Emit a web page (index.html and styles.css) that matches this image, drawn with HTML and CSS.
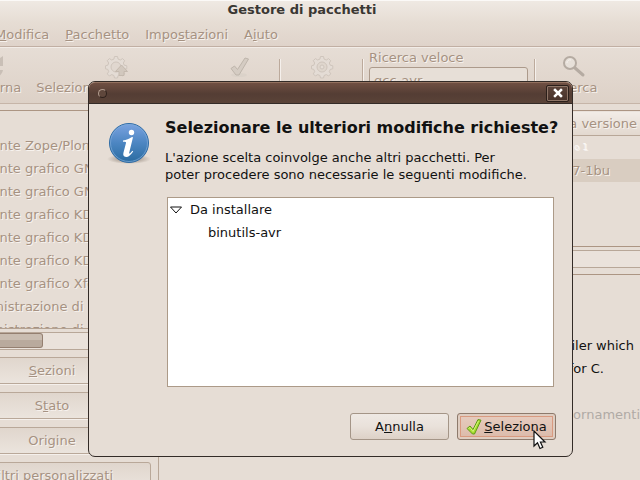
FILE: index.html
```html
<!DOCTYPE html>
<html lang="it">

<head>
    <meta charset="UTF-8">
    <meta name="viewport" content="width=device-width, initial-scale=1.0">
    <title>Gestore di pacchetti</title>
    <link rel="stylesheet" href="styles.css">
</head>

<body>
    <!-- Main window -->
    <div class="window">
        <header class="titlebar">
            <h1>Gestore di pacchetti</h1>
        </header>

        <nav class="menubar">
            <a href="#"><u>M</u>odifica</a>
            <a href="#"><u>P</u>acchetto</a>
            <a href="#">Impo<u>s</u>tazioni</a>
            <a href="#">A<u>i</u>uto</a>
        </nav>

        <div class="toolbar">
            <button class="tool tool-refresh" disabled>
                <svg width="24" height="24" viewBox="0 0 24 24">
                    <path d="M3 11a9 9 0 0 1 14-6l6-4v10h-9l3-3a6 6 0 0 0-9 3zM23 15a9 9 0 0 1-14 6l-4 3v-9h9l-3 3a6 6 0 0 0 9-3z" fill="#c9bfb6" />
                </svg>
                <span>Aggiorna</span>
            </button>
            <button class="tool tool-upgrade" disabled>
                <svg width="24" height="24" viewBox="0 0 24 24">
                    <path d="M9.500 1.500h3l.6 2.600 2.200.9 2.300-1.400 2.100 2.100-1.400 2.300.9 2.200 2.600.6v3l-2.600.6-.9 2.200 1.400 2.300-2.100 2.100-2.300-1.400-2.200.9-.6 2.500h-3l-.6-2.500-2.200-.9-2.300 1.400-2.100-2.100 1.400-2.300-.9-2.200L.500 13.800v-3l2.300-.6.9-2.200-1.400-2.300 2.100-2.100 2.300 1.400 2.200-.9z" fill="#e4dcd5" stroke="#cfc5bc" />
                    <circle cx="11" cy="12" r="5" fill="#e0d7cf" stroke="#cfc5bc" />
                    <path d="M16.500 10l6 6.500h-3.500v4h-5v-4h-3.500z" fill="#d2c8be" stroke="#c4b9ae" />
                </svg>
                <span>Seleziona aggiornamenti</span>
            </button>
            <button class="tool tool-apply" disabled>
                <svg width="24" height="24" viewBox="0 0 24 24">
                    <ellipse cx="11" cy="20" rx="8" ry="2" fill="#dbd2c9" />
                    <path d="M3 13.500l3.500-2.500 3 3.500L17 3l3.500 1L11 20H8z" fill="#d5ccc3" stroke="#beb5ab" stroke-linejoin="round" />
                </svg>
                <span>Applica</span>
            </button>
            <span class="separator"></span>
            <button class="tool tool-properties" disabled>
                <svg width="24" height="24" viewBox="0 0 24 24">
                    <path d="M10.500 1.500h3l.6 2.600 2.200.9 2.300-1.400 2.100 2.100-1.400 2.300.9 2.200 2.600.6v3l-2.600.6-.9 2.200 1.400 2.300-2.100 2.100-2.300-1.400-2.200.9-.6 2.500h-3l-.6-2.500-2.200-.9-2.300 1.400-2.100-2.100 1.400-2.300-.9-2.200-2.300-.6v-3l2.300-.6.9-2.200-1.400-2.300 2.100-2.100 2.300 1.400 2.200-.9z" fill="#e4dcd5" stroke="#cfc5bc" />
                    <circle cx="12" cy="12" r="5" fill="#dfd6cd" stroke="#cfc5bc" />
                    <circle cx="12" cy="12" r="2" fill="#e6ded6" stroke="#cfc5bc" />
                </svg>
                <span>Proprietà</span>
            </button>
            <span class="separator"></span>
            <div class="quick-search">
                <label for="quickSearch">Ricerca veloce</label>
                <input type="text" id="quickSearch" value="gcc-avr" disabled>
            </div>
            <span class="separator"></span>
            <button class="tool tool-search" disabled>
                <svg width="24" height="24" viewBox="0 0 24 24">
                    <path d="M13 13l8 7" stroke="#b5aba2" stroke-width="3" stroke-linecap="round" />
                    <circle cx="8" cy="8" r="6" fill="#e7e0d9" stroke="#b5aba2" stroke-width="2" />
                    <path d="M5 8a3 3 0 0 1 4-3" fill="none" stroke="#f6f2ee" />
                </svg>
                <span>Ricerca</span>
            </button>
        </div>

        <main class="panes">
            <!-- Section list and filter buttons -->
            <aside class="sidebar">
                <ul class="sections">
                    <li>Ambiente Zope/Plon</li>
                    <li>Ambiente grafico GN</li>
                    <li>Ambiente grafico GN</li>
                    <li>Ambiente grafico KD</li>
                    <li>Ambiente grafico KD</li>
                    <li>Ambiente grafico KD</li>
                    <li>Ambiente grafico Xfc</li>
                    <li>Amministrazione di</li>
                    <li>Amministrazione di</li>
                </ul>
                <div class="scrollbar"><div class="thumb"></div></div>
                <div class="filters">
                    <button disabled><u>S</u>ezioni</button>
                    <button disabled>S<u>t</u>ato</button>
                    <button disabled>Origine</button>
                    <button disabled>Filtri personalizzati</button>
                </div>
            </aside>

            <!-- Package list and description -->
            <section class="content">
                <table class="packages">
                    <thead>
                        <tr><th>a versione</th></tr>
                    </thead>
                    <tbody>
                        <tr><td class="faded">o 1</td></tr>
                        <tr class="selected"><td>7-1bu</td></tr>
                        <tr><td></td></tr>
                    </tbody>
                </table>
                <div class="scrollbar"></div>
                <div class="description">
                    <p>iler which</p>
                    <p>for C.</p>
                    <p class="muted">ornamenti</p>
                </div>
            </section>
        </main>
    </div>

    <!-- Confirmation dialog -->
    <div class="dialog" role="dialog" aria-labelledby="dialogTitle">
        <div class="dialog-bar">
            <span class="dialog-dot"></span>
            <button class="close" aria-label="Chiudi">
                <svg width="10" height="10" viewBox="0 0 10 10">
                    <path d="M2 2l6 6M8 2L2 8" stroke="#fff" stroke-width="2.500" stroke-linecap="square" />
                </svg>
            </button>
        </div>
        <div class="dialog-body">
            <svg class="info" width="48" height="48" viewBox="0 0 48 48">
                <defs>
                    <linearGradient id="blue" x1="0" y1="0" x2="0" y2="1">
                        <stop offset="0" stop-color="#7ba3e0" />
                        <stop offset="0.500" stop-color="#4c86c2" />
                        <stop offset="1" stop-color="#2a6ba0" />
                    </linearGradient>
                    <radialGradient id="shade">
                        <stop offset="0.500" stop-color="#b5aaa0" />
                        <stop offset="1" stop-color="#b5aaa0" stop-opacity="0" />
                    </radialGradient>
                </defs>
                <ellipse cx="24" cy="41" rx="22" ry="5" fill="url(#shade)" />
                <circle cx="24" cy="25" r="19.500" fill="url(#blue)" stroke="#2f6ca6" />
                <circle cx="24" cy="25" r="18.500" fill="none" stroke="#7fabd8" stroke-opacity="0.700" />
                <circle cx="26.500" cy="14.500" r="2.700" fill="#fff" />
                <path d="M18 22.500c3.500-.5 6-1.500 9-3.500l1 .2-3.800 15.500c-.2 1 .5 1 1.200.2l2-2.200.8.7c-2.500 3.500-4.500 5.500-7 5.500-2.800 0-3.300-1.800-2.700-4.300l2.500-9.500c.3-1.100-.2-1.400-3-1.400z" fill="#fff" />
            </svg>
            <div class="message">
                <h2 id="dialogTitle">Selezionare le ulteriori modifiche richieste?</h2>
                <p>L'azione scelta coinvolge anche altri pacchetti. Per<br>poter procedere sono necessarie le seguenti modifiche.</p>
                <div class="changes">
                    <div class="group">
                        <svg width="12" height="10" viewBox="0 0 12 10">
                            <path d="M.5 2h11L6 8z" fill="#fff" stroke="#111" />
                        </svg>
                        <span>Da installare</span>
                    </div>
                    <div class="package">binutils-avr</div>
                </div>
            </div>
        </div>
        <div class="actions">
            <button class="btn"><span>A<u>n</u>nulla</span></button>
            <button class="btn btn-hover">
                <svg width="16" height="18" viewBox="0 0 16 18">
                    <path d="M1 10.500l3-2.500 3 3.500L12 1.500l3 .7L8.500 16H6.500z" fill="#a5dc2f" stroke="#5f9a17" stroke-linejoin="round" />
                    <path d="M2.500 10.500l1.500-1 3 4L12.500 3" fill="none" stroke="#d5f57c" />
                </svg>
                <span><u>S</u>eleziona</span>
            </button>
        </div>
        <svg class="cursor" width="14" height="20" viewBox="0 0 14 20">
            <path d="M1 1v15l3.500-3.300L7 18.500l2.800-1.200L7.400 12H12z" fill="#fff" stroke="#111" stroke-width="1.200" />
        </svg>
    </div>
</body>

</html>
```
FILE: styles.css
```css
* {
    box-sizing: border-box;
}

body {
    margin: 0;
    height: 100vh;
    overflow: hidden;
    position: relative;
    background-color: #e6ddd5;
    color: #111;
    font-family: "DejaVu Sans", sans-serif;
    font-size: 13px;
    line-height: 17px;
}

button,
input {
    font: inherit;
    color: inherit;
}

h1,
h2,
p,
ul {
    margin: 0;
    padding: 0;
}

svg {
    display: block;
    flex: none;
}

/* Main window */

.window {
    height: 100vh;
    overflow: hidden;
    display: flex;
    flex-direction: column;
    color: #a69282;
    text-shadow: 1px 1px 0 #f7f2ee;
}

.titlebar {
    height: 22px;
    border-top: 1px solid #fbf9f7;
    background: linear-gradient(#efe9e3, #e6ddd4);
    text-align: center;
    flex: none;
}

.titlebar h1 {
    font-size: 13px;
    line-height: 17px;
    color: #3a3733;
    margin-right: 36px;
    text-shadow: none;
}

.menubar {
    height: 25px;
    flex: none;
    display: flex;
    gap: 16px;
    padding-top: 4px;
    margin-left: -5px;
    background: linear-gradient(#e6ddd4, #dfd3ca);
    border-bottom: 1px solid #c1afa3;
}

.menubar a {
    color: inherit;
    text-decoration: none;
}

.toolbar {
    height: 57px;
    flex: none;
    display: flex;
    margin-left: -45px;
    border-top: 1px solid #f2ece7;
    border-bottom: 1px solid #c6b5a8;
    background: linear-gradient(#e6ddd5, #ddd1c7);
}

.tool {
    display: flex;
    flex-direction: column;
    align-items: center;
    gap: 0;
    padding: 7px 0 0;
    border: 0;
    background: none;
    white-space: nowrap;
    text-shadow: inherit;
    flex: none;
}

.tool-refresh {
    width: 74px;
}

.tool-upgrade {
    width: 176px;
}

.tool-apply {
    width: 70px;
}

.tool-properties,
.tool-search {
    width: 73px;
}

.tool-search {
    margin-left: -3px;
}

.separator {
    width: 2px;
    flex: none;
    height: 32px;
    margin: 11px 4px;
    border-left: 1px solid #bcaa9c;
    border-right: 1px solid #f5f0ec;
}

.quick-search {
    width: 162px;
    flex: none;
    padding: 1px 0 0 1px;
    display: flex;
    flex-direction: column;
    gap: 1px;
}

.quick-search input {
    width: 159px;
    height: 26px;
    padding: 0 4px;
    border: 1px solid #ac9a8b;
    border-radius: 3px;
    background-color: #e7dfd7;
    text-shadow: inherit;
}

.panes {
    flex: 1;
    min-height: 0;
    display: flex;
    padding-top: 6px;
}

.sidebar {
    width: 159px;
    flex: none;
    padding-right: 7px;
    border-right: 1px solid #b8a798;
    overflow: hidden;
}

.sections {
    height: 219px;
    margin-left: -42px;
    overflow: hidden;
    list-style: none;
    padding-top: 23px;
    border-top: 1px solid #ac9583;
    border-bottom: 1px solid #b3a191;
    white-space: nowrap;
}

.sections li {
    line-height: 23px;
}

.scrollbar {
    height: 18px;
    margin-top: 3px;
    border-top: 1px solid #b8a798;
    border-bottom: 1px solid #b8a798;
    background-color: #eae2db;
}

.thumb {
    width: 43px;
    height: 15px;
    border: 1px solid #947f70;
    border-left: 0;
    border-radius: 0 3px 3px 0;
    background: linear-gradient(#c9bcb0 50%, #b9aa9d 50%);
}

.filters {
    margin: 7px 0 0 -47px;
    display: flex;
    flex-direction: column;
    gap: 8px;
}

.filters button {
    height: 27px;
    padding: 0;
    border: 1px solid #b9a899;
    border-radius: 3px;
    background: linear-gradient(#e0d6cd, #ebe4dd);
    box-shadow: 0 1px 0 #f5f0ec;
    text-shadow: inherit;
}

.content {
    flex: 1;
    min-width: 0;
}

.packages {
    width: 100%;
    height: 137px;
    border-collapse: collapse;
    border-top: 1px solid #ac9583;
    border-bottom: 1px solid #ac9583;
    text-align: right;
}

.packages th {
    height: 25px;
    padding: 0 3px 0 0;
    font-weight: normal;
    text-align: right;
    background: linear-gradient(#f2ece7, #e2d8cf);
    border-bottom: 1px solid #b8a798;
}

.packages td {
    height: 23px;
    padding: 0 30px 0 0;
}

.packages .faded {
    padding-right: 52px;
    font-size: 9px;
    color: #fbf8f6;
}

.packages tr:last-child td {
    height: auto;
}

.selected {
    background-color: #d9cdc1;
}

.description {
    margin-top: 6px;
    padding: 59px 6px 0 0;
    border-top: 1px solid #ac9583;
    color: #111;
    text-align: right;
    line-height: 23px;
    text-shadow: none;
}

.description p:nth-child(2) {
    padding-right: 30px;
}

.description .muted {
    margin: 23px -6px 0 0;
    color: #b0aaa5;
}

/* Dialog */

.dialog {
    position: absolute;
    left: 88px;
    top: 81px;
    width: 485px;
    border: 1px solid #332b27;
    border-radius: 7px;
    background-color: #e6ddd5;
}

.dialog-bar {
    height: 22px;
    display: flex;
    align-items: center;
    justify-content: space-between;
    padding: 0 3px 0 9px;
    border-top: 1px solid #93715f;
    border-bottom: 1px solid #332b27;
    border-radius: 6px 6px 0 0;
    background: linear-gradient(#6f4f42, #543d34 55%, #5a4338);
}

.dialog-dot {
    width: 9px;
    height: 9px;
    border: 1px solid #2e211c;
    border-left-color: #b09a8d;
    border-top-color: #b09a8d;
    border-radius: 50%;
    background-color: #5f473c;
}

.close {
    width: 23px;
    height: 17px;
    display: flex;
    align-items: center;
    justify-content: center;
    padding: 0;
    border: 1px solid #2b1f1a;
    border-radius: 2px;
    background: linear-gradient(#5d453b, #463129);
    box-shadow: inset 0 0 0 1px #8e7567;
}

.dialog-body {
    display: flex;
    gap: 12px;
    padding: 14px 16px 0 16px;
}

.message {
    flex: 1;
    min-width: 0;
}

.message h2 {
    font-size: 16px;
    line-height: 19px;
    margin-bottom: 12px;
    white-space: nowrap;
}

.message p {
    margin-bottom: 14px;
    white-space: nowrap;
}

.changes {
    height: 190px;
    margin: 0 2px;
    border: 1px solid #ac9a88;
    background-color: #fff;
    line-height: 23px;
}

.group {
    display: flex;
    align-items: center;
    gap: 8px;
    padding-left: 2px;
}

.package {
    padding-left: 40px;
}

.actions {
    display: flex;
    justify-content: flex-end;
    gap: 8px;
    padding: 26px 16px 16px;
}

.btn {
    width: 99px;
    height: 27px;
    display: flex;
    align-items: center;
    justify-content: center;
    gap: 2px;
    padding: 0;
    border: 1px solid #a49587;
    border-radius: 3px;
    background: linear-gradient(#efe9e4, #e9e1da 50%, #ddd1c7);
}

.btn-hover {
    border-color: #8d7a6c;
    background: linear-gradient(#e6cdc0, #e2c4b5 50%, #dab9a9);
    box-shadow: inset 0 0 0 2px #dfcdc1, inset 0 0 0 3px #d99a80;
}

.cursor {
    position: absolute;
    left: 444px;
    top: 348px;
}
```
